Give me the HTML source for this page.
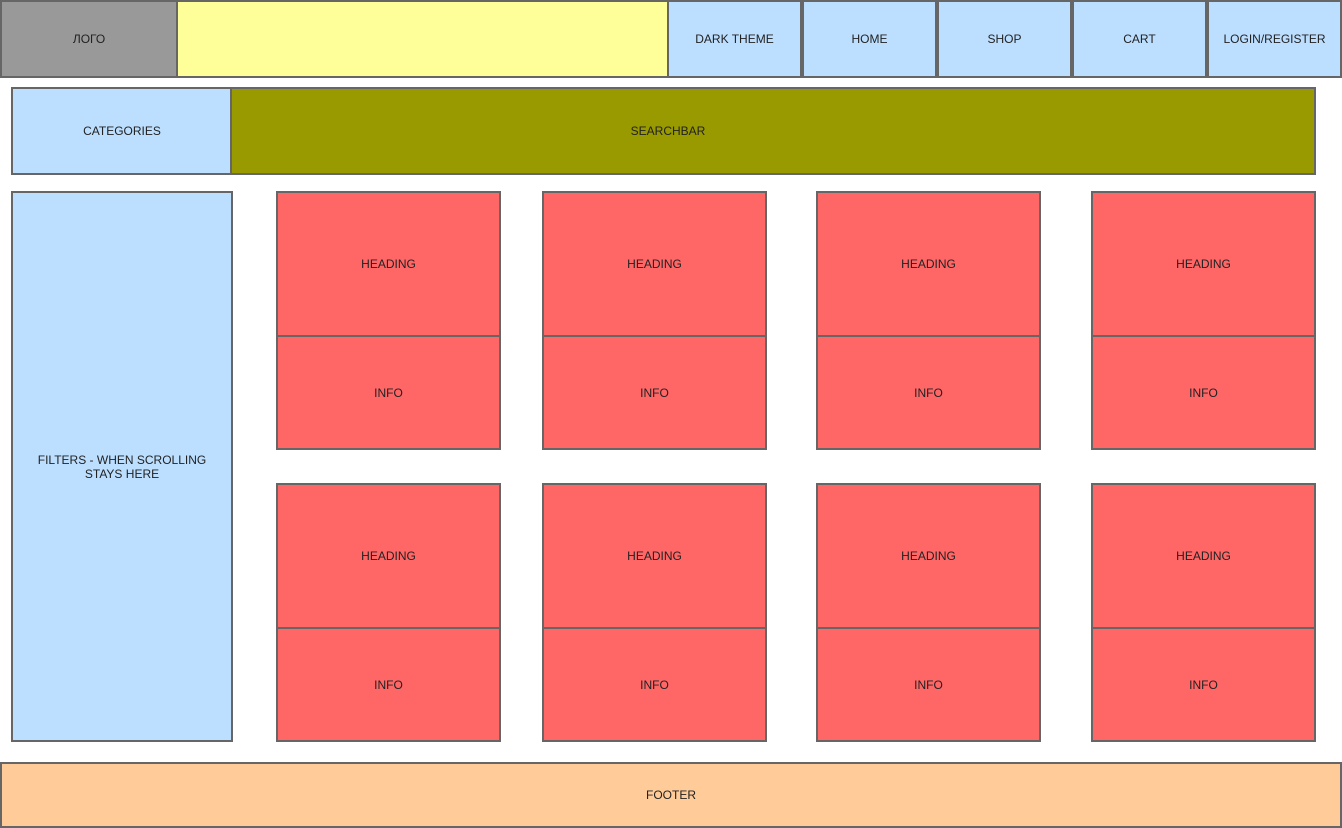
<!DOCTYPE html><html><head><style>
body{margin:0;width:1342px;height:828px;position:relative;background:#fff;font-family:"Liberation Sans",Arial,sans-serif;font-size:12px;color:#222;overflow:hidden}
.b{position:absolute;box-sizing:border-box;border:2px solid #666;display:flex;align-items:center;justify-content:center;text-align:center}
.r{background:#f66}.l{background:#bddfff}
</style></head><body>
<div class="b" style="left:0;top:0;width:178px;height:78px;background:#999">ЛОГО</div>
<div class="b" style="left:176px;top:0;width:493px;height:78px;background:#ff9"></div>
<div class="b l" style="left:667px;top:0;width:135px;height:78px">DARK THEME</div>
<div class="b l" style="left:802px;top:0;width:135px;height:78px">HOME</div>
<div class="b l" style="left:937px;top:0;width:135px;height:78px">SHOP</div>
<div class="b l" style="left:1072px;top:0;width:135px;height:78px">CART</div>
<div class="b l" style="left:1207px;top:0;width:135px;height:78px">LOGIN/REGISTER</div>
<div class="b l" style="left:11px;top:87px;width:222px;height:88px">CATEGORIES</div>
<div class="b" style="left:230px;top:87px;width:1086px;height:88px;background:#990;padding-right:210px">SEARCHBAR</div>
<div class="b l" style="left:11px;top:191px;width:222px;height:551px">FILTERS - WHEN SCROLLING<br>STAYS HERE</div>
<div class="b r" style="left:276px;top:191px;width:225px;height:146px">HEADING</div><div class="b r" style="left:276px;top:335px;width:225px;height:115px">INFO</div>
<div class="b r" style="left:542px;top:191px;width:225px;height:146px">HEADING</div><div class="b r" style="left:542px;top:335px;width:225px;height:115px">INFO</div>
<div class="b r" style="left:816px;top:191px;width:225px;height:146px">HEADING</div><div class="b r" style="left:816px;top:335px;width:225px;height:115px">INFO</div>
<div class="b r" style="left:1091px;top:191px;width:225px;height:146px">HEADING</div><div class="b r" style="left:1091px;top:335px;width:225px;height:115px">INFO</div>
<div class="b r" style="left:276px;top:483px;width:225px;height:146px">HEADING</div><div class="b r" style="left:276px;top:627px;width:225px;height:115px">INFO</div>
<div class="b r" style="left:542px;top:483px;width:225px;height:146px">HEADING</div><div class="b r" style="left:542px;top:627px;width:225px;height:115px">INFO</div>
<div class="b r" style="left:816px;top:483px;width:225px;height:146px">HEADING</div><div class="b r" style="left:816px;top:627px;width:225px;height:115px">INFO</div>
<div class="b r" style="left:1091px;top:483px;width:225px;height:146px">HEADING</div><div class="b r" style="left:1091px;top:627px;width:225px;height:115px">INFO</div>
<div class="b" style="left:0;top:762px;width:1342px;height:66px;background:#fc9">FOOTER</div>
</body></html>
